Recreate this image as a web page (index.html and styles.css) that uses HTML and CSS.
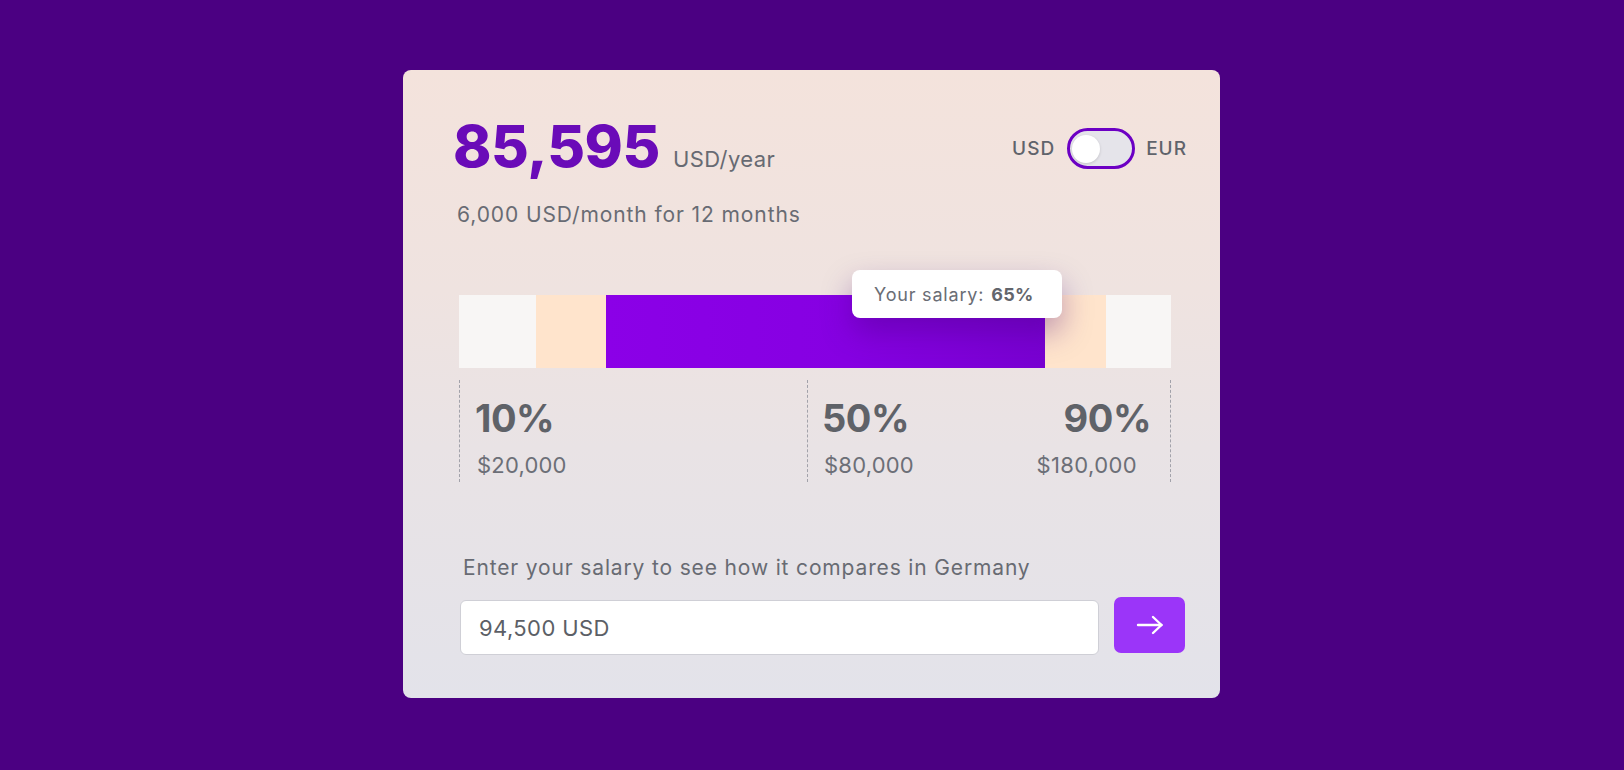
FILE: index.html
```html
<!DOCTYPE html>
<html lang="en">
<head>
<meta charset="utf-8">
<title>Salary comparison</title>
<link rel="stylesheet" href="styles.css">
</head>
<body>
<div class="page">
  <div class="card">
    <div class="header">
      <div class="summary">
        <div class="amount-row">
          <span class="amount">85,595</span>
          <span class="unit">USD/year</span>
        </div>
        <div class="subtitle">6,000 USD/month for 12 months</div>
      </div>
      <div class="currency">
        <span class="cur-label">USD</span>
        <span class="toggle"><span class="knob"></span></span>
        <span class="cur-label">EUR</span>
      </div>
    </div>

    <div class="bar-wrap">
      <div class="bar">
        <div class="seg seg-white" style="width:77px"></div>
        <div class="seg seg-peach" style="width:70px"></div>
        <div class="seg seg-purple" style="width:439px"></div>
        <div class="seg seg-peach" style="width:61px"></div>
        <div class="seg seg-white seg-fill"></div>
      </div>
      <div class="tooltip"><span class="tip-label">Your salary:</span><b>65%</b></div>
    </div>

    <div class="scale">
      <div class="col col-left">
        <div class="pct">10%</div>
        <div class="money">$20,000</div>
      </div>
      <div class="col col-right">
        <div class="mark">
          <div class="pct">50%</div>
          <div class="money">$80,000</div>
        </div>
        <div class="mark mark-end">
          <div class="pct">90%</div>
          <div class="money money-end">$180,000</div>
        </div>
      </div>
    </div>

    <div class="entry-label">Enter your salary to see how it compares in Germany</div>
    <div class="entry-row">
      <div class="input">94,500 USD</div>
      <button class="go" type="button" aria-label="Submit">
        <svg width="28" height="20" viewBox="0 0 28 20" fill="none" stroke="#ffffff" stroke-width="2.4" stroke-linecap="round" stroke-linejoin="round">
          <path d="M2 10 H25.5"/>
          <path d="M17 2 L25.5 10 L17 18"/>
        </svg>
      </button>
    </div>
  </div>
</div>
</body>
</html>
```

FILE: styles.css
```css
* { box-sizing: border-box; }

html, body {
  margin: 0;
  padding: 0;
}

body {
  background: #4b0082;
  font-family: Inter, "Noto Sans", "Liberation Sans", sans-serif;
  color: #6a6d75;
}

.page {
  height: 770px;
  padding-top: 70px;
  padding-left: 403px;
  display: flex;
  align-items: flex-start;
}

.card {
  width: 817px;
  height: 628px;
  border-radius: 8px;
  background: linear-gradient(180deg, #f4e3dc 0%, #efe3e0 35%, #e9e3e5 60%, #e3e3ea 100%);
  padding: 47px 49px 43px 56px;
  display: flex;
  flex-direction: column;
}

.header {
  display: flex;
  justify-content: space-between;
  align-items: flex-start;
  margin-right: -16px;
}

.summary {
  display: flex;
  flex-direction: column;
}

.amount-row {
  display: flex;
  align-items: baseline;
  gap: 13px;
  margin-left: -6px;
}

.amount {
  font-size: 58px;
  line-height: 59px;
  font-weight: 800;
  color: #6a0bb8;
  letter-spacing: -0.4px;
}

.unit {
  font-size: 22px;
  letter-spacing: 0.4px;
  color: #676a72;
}

.subtitle {
  margin-top: 27px;
  margin-left: -2px;
  font-size: 21px;
  line-height: 24px;
  letter-spacing: 0.9px;
  color: #686b73;
}

.currency {
  margin-top: 11px;
  display: flex;
  align-items: center;
  height: 41px;
}

.cur-label {
  font-size: 19px;
  font-weight: 500;
  letter-spacing: 1px;
  color: #60636b;
}

.toggle {
  width: 68px;
  height: 41px;
  margin: 0 11px 0 12px;
  border: 3px solid #6c00c4;
  border-radius: 21px;
  background: #e5e4ea;
  display: flex;
  align-items: center;
  padding-left: 2px;
}

.knob {
  width: 28px;
  height: 28px;
  border-radius: 50%;
  background: #ffffff;
  box-shadow: 0 1px 3px rgba(0, 0, 0, 0.15);
}

.bar-wrap {
  position: relative;
  margin-top: 68px;
}

.bar {
  display: flex;
  height: 73px;
}

.seg { height: 100%; }
.seg-white { background: #f8f6f5; }
.seg-peach { background: #ffe4cc; }
.seg-purple { background: linear-gradient(90deg, #8b00e7 0%, #8600e2 55%, #7800d1 100%); }
.seg-fill { flex: 1; }

.tooltip {
  position: absolute;
  left: 393px;
  top: -25px;
  width: 210px;
  height: 48px;
  padding: 1px 0 0 22px;
  background: #ffffff;
  border-radius: 8px;
  display: flex;
  align-items: center;
  font-size: 18px;
  color: #6a6d75;
  box-shadow: 0 14px 30px rgba(70, 0, 120, 0.35);
}

.tip-label {
  letter-spacing: 0.8px;
}

.tooltip b {
  font-weight: 700;
  margin-left: 7px;
  letter-spacing: 0.3px;
  color: #62656c;
}

.scale {
  display: flex;
  margin-top: 12px;
  height: 102px;
}

.col {
  border-left: 1px dashed #a2a2aa;
  padding-top: 15px;
}

.col-left {
  width: 348px;
  padding-left: 15px;
}

.col-right {
  flex: 1;
  display: flex;
  justify-content: space-between;
  border-right: 1px dashed #a2a2aa;
  padding-left: 14px;
  padding-right: 19px;
}

.mark-end { text-align: right; }

.pct {
  font-size: 38px;
  line-height: 46px;
  font-weight: 700;
  color: #5f6268;
  letter-spacing: -0.5px;
}

.money {
  margin-top: 10px;
  margin-left: 2px;
  font-size: 22px;
  line-height: 28px;
  letter-spacing: 0.2px;
  color: #6c6f77;
}

.money-end {
  margin-right: 14px;
  letter-spacing: 0.4px;
}

.entry-label {
  margin-top: 73px;
  margin-left: 4px;
  font-size: 21px;
  line-height: 26px;
  letter-spacing: 0.85px;
  color: #686b73;
}

.entry-row {
  margin-top: 16px;
  margin-right: -14px;
  display: flex;
  align-items: flex-start;
  gap: 15px;
}

.input {
  flex: 1;
  height: 55px;
  margin-top: 3px;
  margin-left: 1px;
  background: #ffffff;
  border: 1px solid #cfcfd6;
  border-radius: 6px;
  padding-left: 18px;
  display: flex;
  align-items: center;
  font-size: 22px;
  letter-spacing: 0.4px;
  color: #5c5f66;
}

.go {
  width: 71px;
  height: 56px;
  border: none;
  border-radius: 7px;
  background: #9b35f9;
  display: flex;
  align-items: center;
  justify-content: center;
  padding: 0;
  cursor: pointer;
}
```
